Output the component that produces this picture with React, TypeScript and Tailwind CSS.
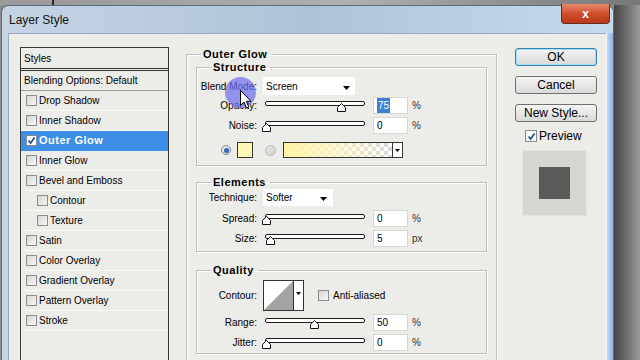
const ui = "font-['Liberation_Sans',Arial,sans-serif]"

const styleRows = [
  { label: 'Drop Shadow' },
  { label: 'Inner Shadow' },
  { label: 'Outer Glow', on: true },
  { label: 'Inner Glow' },
  { label: 'Bevel and Emboss' },
  { label: 'Contour', sub: true },
  { label: 'Texture', sub: true },
  { label: 'Satin' },
  { label: 'Color Overlay' },
  { label: 'Gradient Overlay' },
  { label: 'Pattern Overlay' },
  { label: 'Stroke' },
]

function Check({ on }: { on?: boolean }) {
  return (
    <span
      className={`flex h-[11px] w-[11px] shrink-0 items-center justify-center border border-[#8c8c8c] ${
        on ? 'bg-white' : 'bg-gradient-to-br from-[#d6d6d4] to-[#f7f7f5]'
      }`}
    >
      {on && (
        <svg width="9" height="9" viewBox="0 0 9 9">
          <path d="M1.5 4.5 L3.6 7 L7.6 1.5" fill="none" stroke="#23508e" strokeWidth="1.7" />
        </svg>
      )}
    </span>
  )
}

function Legend({ children }: { children: React.ReactNode }) {
  return (
    <legend className="ml-[14px] px-[2px] pr-[4px] text-[11px] font-bold leading-[14px] tracking-[0.5px] text-black">
      {children}
    </legend>
  )
}

function Arrow() {
  return (
    <svg width="7" height="4" viewBox="0 0 7 4" className="mt-[3px]">
      <path d="M0 0 H7 L3.5 4 Z" fill="#000" />
    </svg>
  )
}

function Slider({ pos }: { pos: number }) {
  return (
    <div className="relative ml-[6px] h-[17px] w-[104px] shrink-0">
      <div className="absolute left-[2px] top-[4px] h-[5px] w-[100px] rounded-[2px] border border-[#1a1a1a] bg-white" />
      <svg className="absolute top-[6px]" style={{ left: pos - 2 }} width="9" height="9" viewBox="0 0 9 9">
        <path d="M0.5 8.5 V4.5 L4.5 0.5 L8.5 4.5 V8.5 Z" fill="#fff" stroke="#111" />
      </svg>
    </div>
  )
}

function Num({ value, hl }: { value: string; hl?: boolean }) {
  return (
    <div className="ml-[6px] flex h-[17px] w-[35px] shrink-0 items-center border border-[#d6d6d3] bg-white pl-[3px]">
      <span className={hl ? 'bg-[#3b7fd6] px-[1px] text-white' : ''}>{value}</span>
    </div>
  )
}

function SliderRow({
  label,
  pos,
  value,
  unit,
  hl,
  className,
}: {
  label: string
  pos: number
  value: string
  unit: string
  hl?: boolean
  className: string
}) {
  return (
    <div className={`flex h-[17px] items-center ${className}`}>
      <span className="w-[60px] shrink-0 text-right">{label}</span>
      <Slider pos={pos} />
      <Num value={value} hl={hl} />
      <span className="ml-[4px] text-[#333]">{unit}</span>
    </div>
  )
}

function Btn({ children, primary, className }: { children: React.ReactNode; primary?: boolean; className: string }) {
  return (
    <div
      className={`flex h-[18px] items-center justify-center rounded-[3px] border bg-gradient-to-b from-[#f5f5f5] to-[#d9d9d9] text-[12px] text-black ${
        primary ? 'border-[#3c7fb1] shadow-[inset_0_0_0_1px_#9fdcf6]' : 'border-[#707070]'
      } ${className}`}
    >
      {children}
    </div>
  )
}

export default function App() {
  const fs = 'border border-[#bdbdb9] shadow-[inset_1px_1px_0_#fff,1px_1px_0_#fff]'
  return (
    <div className={`relative flex h-[360px] w-[640px] flex-col overflow-hidden bg-[#8f8f8f] text-[10px] text-black ${ui}`}>
      <div className="flex h-[5px] shrink-0">
        <div className="w-[52px] bg-[#9c9c9c]" />
        <div className="w-[2px] bg-[#2a2a2a]" />
        <div className="flex-1 bg-gradient-to-r from-[#9a9a9a] via-[#b0b0b0] to-[#777]" />
      </div>
      <div className="flex flex-1">
        <div className="ml-[1px] flex w-[613px] shrink-0 flex-col rounded-t-[7px] border border-b-0 border-[#5b6b7e] bg-gradient-to-r from-[#c5d4e3] via-[#afc3d8] to-[#c6daee]">
          <div className="flex h-[27px] shrink-0 items-center pl-[7px]">
            <span className="text-[12px] text-[#111]">Layer Style</span>
            <div className="-mt-[2px] ml-auto mr-[3px] flex h-[20px] w-[49px] items-center justify-center self-start rounded-b-[4px] border border-t-0 border-[#6b2c1c] bg-gradient-to-b from-[#e88a6c] via-[#cf4f2c] to-[#b8391c] text-[12px] font-bold text-white">
              x
            </div>
          </div>
          <div className="flex flex-1">
            <div className="ml-[6px] flex w-[598px] shrink-0 border-l border-t border-[#9aaabb] bg-[#ecece9] pl-[11px] pt-[13px]">
              {/* styles list */}
              <div className="h-[320px] w-[149px] shrink-0 border border-[#3a3a3a] bg-[#ecece9]">
                <div className="flex h-[20px] items-center pl-[3px]">Styles</div>
                <div className="border-t-[3px] border-double border-[#333]" />
                <div className="flex h-[20px] items-center border-b border-[#9c9c9c] pl-[3px]">Blending Options: Default</div>
                {styleRows.map((r) => (
                  <div
                    key={r.label}
                    className={`flex h-[20px] items-center border-b ${r.sub ? 'pl-[16px]' : 'pl-[5px]'} ${
                      r.on ? 'border-[#3d8ee6] bg-[#3d8ee6] text-white' : 'border-[#fafaf8]'
                    }`}
                  >
                    <Check on={r.on} />
                    <span className={`ml-[2px] ${r.on ? 'text-[11px] font-bold tracking-[0.5px]' : ''}`}>{r.label}</span>
                  </div>
                ))}
              </div>

              {/* outer glow */}
              <fieldset className={`ml-[17px] h-[330px] w-[311px] shrink-0 ${fs}`}>
                <Legend>Outer Glow</Legend>
                <fieldset className={`-mt-[1px] ml-[9px] w-[291px] pb-[7px] ${fs}`}>
                  <Legend>Structure</Legend>
                  <div className="mt-[3px] flex h-[18px] items-center">
                    <span className="w-[60px] shrink-0 text-right">Blend Mode:</span>
                    <div className="ml-[6px] flex h-[18px] w-[92px] items-center justify-between bg-white pl-[3px] pr-[5px]">
                      <span>Screen</span>
                      <Arrow />
                    </div>
                  </div>
                  <SliderRow label="Opacity:" pos={76} value="75" unit="%" hl className="mt-[2px]" />
                  <SliderRow label="Noise:" pos={1} value="0" unit="%" className="mt-[3px]" />
                  <div className="mt-[8px] flex h-[16px] items-center">
                    <span className="ml-[24px] flex h-[10px] w-[10px] items-center justify-center rounded-full border border-[#8a8a8a] bg-gradient-to-br from-[#f4f4f4] to-[#cfcfcf]">
                      <span className="h-[5px] w-[5px] rounded-full bg-[#2d6db5]" />
                    </span>
                    <div className="ml-[6px] h-[16px] w-[16px] border border-[#333] bg-[#fff6b6]" />
                    <span className="ml-[12px] h-[11px] w-[11px] rounded-full border border-[#b8b8b8] bg-gradient-to-br from-[#e6e6e6] to-[#cfcfcf]" />
                    <div className="ml-[7px] flex h-[16px] w-[120px] border border-[#333]">
                      <div className="flex-1 bg-[repeating-conic-gradient(#d9d9d9_0_25%,#fff_0_50%)] bg-[length:8px_8px]">
                        <div className="h-full w-full bg-gradient-to-r from-[#fff4a6] via-[#fff6c4]/70 to-transparent" />
                      </div>
                      <div className="flex w-[10px] items-center justify-center border-l border-[#333] bg-white">
                        <svg width="5" height="3" viewBox="0 0 5 3">
                          <path d="M0 0 H5 L2.5 3 Z" fill="#000" />
                        </svg>
                      </div>
                    </div>
                  </div>
                </fieldset>

                <fieldset className={`ml-[9px] mt-[9px] w-[291px] pb-[4px] ${fs}`}>
                  <Legend>Elements</Legend>
                  <div className="flex h-[17px] items-center">
                    <span className="w-[60px] shrink-0 text-right">Technique:</span>
                    <div className="ml-[6px] flex h-[17px] w-[70px] items-center justify-between bg-white pl-[3px] pr-[6px]">
                      <span>Softer</span>
                      <Arrow />
                    </div>
                  </div>
                  <SliderRow label="Spread:" pos={1} value="0" unit="%" className="mt-[4px]" />
                  <SliderRow label="Size:" pos={5} value="5" unit="px" className="mt-[3px]" />
                </fieldset>

                <fieldset className={`ml-[9px] mt-[11px] w-[291px] pb-[2px] ${fs}`}>
                  <Legend>Quality</Legend>
                  <div className="mt-[3px] flex h-[31px] items-center">
                    <span className="w-[60px] shrink-0 text-right">Contour:</span>
                    <div className="ml-[6px] flex h-[31px] w-[41px] border border-[#333] bg-white">
                      <svg width="29" height="29" viewBox="0 0 29 29">
                        <path d="M0 29 L29 0 V29 Z" fill="#a3a3a1" />
                      </svg>
                      <div className="flex flex-1 justify-center border-l border-[#333] pt-[11px]">
                        <svg width="5" height="3" viewBox="0 0 5 3">
                          <path d="M0 0 H5 L2.5 3 Z" fill="#000" />
                        </svg>
                      </div>
                    </div>
                    <span className="ml-[14px]">
                      <Check />
                    </span>
                    <span className="ml-[4px]">Anti-aliased</span>
                  </div>
                  <SliderRow label="Range:" pos={49} value="50" unit="%" className="mt-[3px]" />
                  <SliderRow label="Jitter:" pos={1} value="0" unit="%" className="mt-[3px]" />
                </fieldset>
              </fieldset>

              {/* buttons */}
              <div className="ml-[18px] flex w-[82px] shrink-0 flex-col">
                <Btn primary className="mt-[1px]">OK</Btn>
                <Btn className="mt-[10px]">Cancel</Btn>
                <Btn className="mt-[10px]">New Style...</Btn>
                <div className="ml-[10px] mt-[8px] flex h-[12px] items-center">
                  <span className="flex h-[12px] w-[12px] items-center justify-center border border-[#8c8c8c] bg-white">
                    <svg width="9" height="9" viewBox="0 0 9 9">
                      <path d="M1.5 4.5 L3.6 7 L7.6 1.5" fill="none" stroke="#23508e" strokeWidth="1.7" />
                    </svg>
                  </span>
                  <span className="ml-[2px] text-[12px]">Preview</span>
                </div>
                <div className="ml-[7px] mt-[8px] flex h-[66px] w-[65px] items-center justify-center border border-[#e4e4e1] bg-[#d5d5d2]">
                  <div className="h-[32px] w-[31px] bg-[#595957]" />
                </div>
              </div>
            </div>
            <div className="flex-1 border-l border-[#f4f4f4] bg-gradient-to-r from-[#c4d8ee] to-[#8db3e2]" />
          </div>
        </div>
        <div className="flex-1 bg-gradient-to-r from-[#454545] via-[#6e6e6e] to-[#9c9c9c]" />
      </div>

      {/* screen-recording cursor highlight */}
      <div className="absolute left-[225px] top-[77px] h-[31px] w-[31px] rounded-full bg-[#6e6ef0]/70" />
      <svg className="absolute left-[240px] top-[90px]" width="12" height="19" viewBox="0 0 12 19">
        <path d="M0.5 0.5 V15.5 L4 12 L6.5 18 L8.8 17 L6.3 11.3 H11 Z" fill="#fff" stroke="#000" strokeWidth="1" />
      </svg>
    </div>
  )
}
